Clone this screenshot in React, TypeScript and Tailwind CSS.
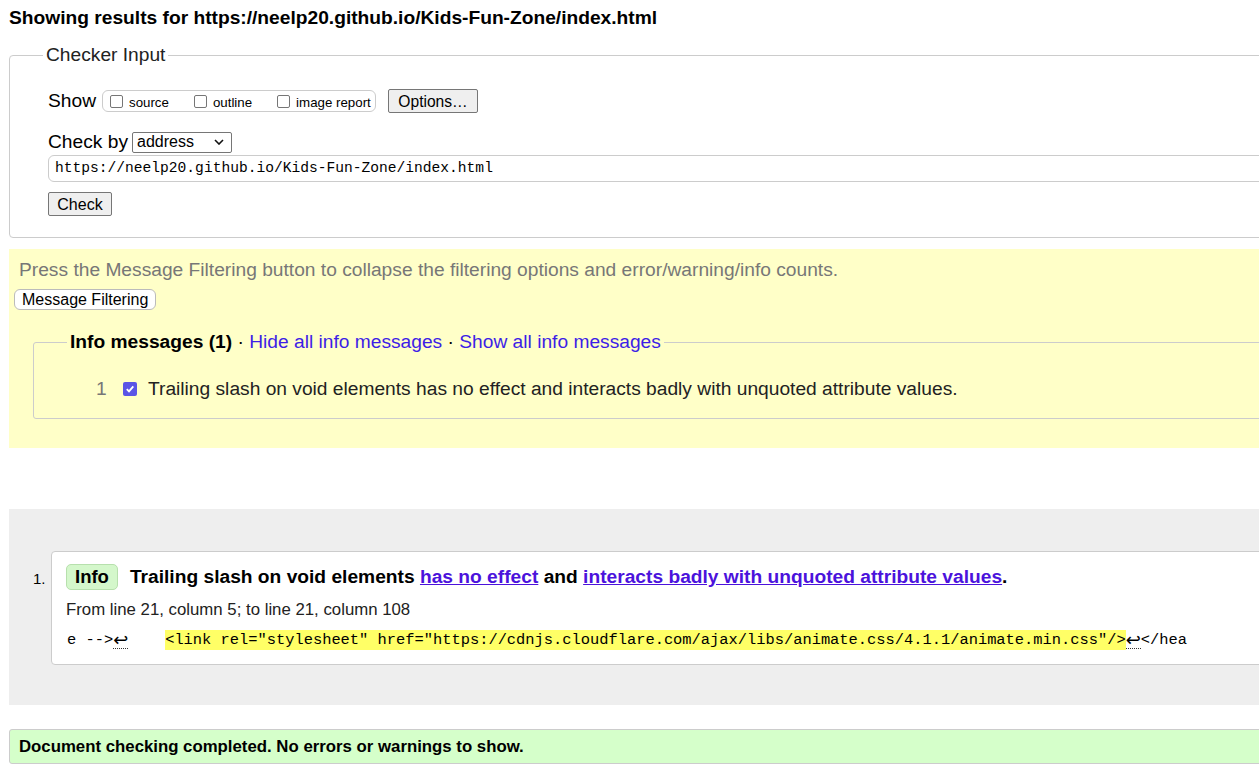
import React from "react";

const sans = { fontFamily: '"Liberation Sans", Arial, sans-serif' };

function Box({ checked = false }: { checked?: boolean }) {
  if (checked) {
    return (
      <span className="inline-flex h-[14px] w-[14px] items-center justify-center rounded-[2px] bg-[#5a55e6]">
        <svg width="10" height="10" viewBox="0 0 10 10">
          <path d="M1.8 5.2 L4 7.4 L8.3 2.4" stroke="white" strokeWidth="1.8" fill="none" />
        </svg>
      </span>
    );
  }
  return <span className="inline-block h-[13px] w-[13px] shrink-0 rounded-[2px] border border-[#767676] bg-white" />;
}

function Ret() {
  return (
    <span className="w-[15px] border-b border-dotted border-[#333] text-center font-['DejaVu_Sans',sans-serif] text-[18px] leading-[16px]">↩</span>
  );
}

export default function App() {
  return (
    <div className="h-[764px] w-full overflow-hidden bg-white text-black" style={sans}>
      <div className="pl-[9px] pr-0">
        <h2 className="pt-[7px] text-[19.2px] font-bold leading-[22px]">
          Showing results for https://neelp20.github.io/Kids-Fun-Zone/index.html
        </h2>

        {/* checker input */}
        <fieldset className="mr-[-30px] mt-[15px] rounded-[4px] border border-[#cccccc] pb-[20px] pl-[38px]">
          <legend className="ml-[-5px] px-[3px] text-[19.2px] leading-[22px] text-[#222]">Checker Input</legend>

          <div className="mt-[23px] flex h-[24px] items-center">
            <span className="text-[19.2px] leading-[22px]">Show</span>
            <div className="ml-[6px] flex h-[22px] w-[274px] items-center rounded-[6px] border border-[#cccccc] pl-[7px] text-[13.3px]">
              <label className="flex items-center gap-[6px]">
                <Box /> <span className="mt-[3px]">source</span>
              </label>
              <label className="ml-[25px] flex items-center gap-[6px]">
                <Box /> <span className="mt-[3px]">outline</span>
              </label>
              <label className="ml-[25px] flex items-center gap-[6px]">
                <Box /> <span className="mt-[3px]">image report</span>
              </label>
            </div>
            <button className="ml-[12px] h-[24px] w-[90px] rounded-[2px] border border-[#767676] bg-[#efefef] text-[15.6px]">
              Options…
            </button>
          </div>

          <div className="mt-[19px] flex h-[20px] items-center">
            <span className="text-[19.2px] leading-[22px]">Check by</span>
            <div className="ml-[4px] flex h-[21px] w-[100px] items-center justify-between rounded-[2px] border border-[#767676] pl-[4px] pr-[7px] text-[16px]">
              <span>address</span>
              <svg width="10" height="6" viewBox="0 0 10 6">
                <path d="M1 1 L5 5 L9 1" stroke="#111" strokeWidth="1.6" fill="none" />
              </svg>
            </div>
          </div>

          <div className="mt-[3px] flex h-[27px] items-center rounded-[6px] border border-[#cccccc] pl-[6px] font-['Liberation_Mono',monospace] text-[14.6px]">
            https://neelp20.github.io/Kids-Fun-Zone/index.html
          </div>

          <button className="mt-[10px] h-[24px] w-[64px] rounded-[2px] border border-[#767676] bg-[#efefef] text-[16px]">
            Check
          </button>
        </fieldset>

        {/* message filtering */}
        <div className="mr-[-30px] mt-[11px] bg-[#ffffc8] pb-[29px] pt-[10px]">
          <p className="pl-[10px] text-[19.2px] leading-[22px] text-[#777777]">
            Press the Message Filtering button to collapse the filtering options and error/warning/info counts.
          </p>
          <button className="ml-[5px] mt-[8px] h-[21px] rounded-[6px] border border-[#bbbbbb] bg-white px-[7px] text-[16px] leading-[19px]">
            Message Filtering
          </button>
          <fieldset className="ml-[24px] mt-[19px] rounded-[3px] border border-[#cccccc] pb-[18px]">
            <legend className="ml-[33px] px-[3px] text-[19.2px] leading-[22px]">
              <strong>Info messages (1)</strong> ·{" "}
              <a className="text-[#3d1ee6]">Hide all info messages</a> ·{" "}
              <a className="text-[#3d1ee6]">Show all info messages</a>
            </legend>
            <div className="mt-[25px] flex h-[22px] items-center text-[19.2px] leading-[22px]">
              <span className="ml-[62px] w-[12px] text-[#777]">1</span>
              <span className="mb-[3px] ml-[15px]">
                <Box checked />
              </span>
              <span className="ml-[11px] text-[#222]">
                Trailing slash on void elements has no effect and interacts badly with unquoted attribute values.
              </span>
            </div>
          </fieldset>
        </div>

        {/* results */}
        <div className="mr-[-30px] mt-[61px] flex bg-[#eeeeee] pb-[40px] pt-[42px]">
          <span className="ml-[24px] mt-[17px] w-[18px] text-[15px]">1.</span>
          <div className="flex-1 rounded-[4px] border border-[#cccccc] bg-white pb-[14px] pl-[14px] pt-[12px]">
            <div className="flex h-[26px] items-center">
              <span className="flex h-[26px] items-center rounded-[5px] border border-[#b7e0ad] bg-[#d4f7cb] px-[8px] text-[18.5px] font-bold">
                Info
              </span>
              <p className="ml-[12px] text-[19.2px] font-bold leading-[22px]">
                Trailing slash on void elements{" "}
                <a className="text-[#4b12dc] underline">has no effect</a> and{" "}
                <a className="text-[#4b12dc] underline">interacts badly with unquoted attribute values</a>.
              </p>
            </div>
            <p className="mt-[10px] text-[16.8px] leading-[20px] text-[#222]">From line 21, column 5; to line 21, column 108</p>
            <div className="ml-[1px] mt-[10px] flex items-center whitespace-pre font-['Liberation_Mono',monospace] text-[15.4px] leading-[20px]">
              <span>e --&gt;</span>
              <Ret />
              <span>    </span>
              <span className="bg-[#ffff66]">
                &lt;link rel="stylesheet" href="https://cdnjs.cloudflare.com/ajax/libs/animate.css/4.1.1/animate.min.css"/&gt;
              </span>
              <Ret />
              <span>&lt;/hea</span>
            </div>
          </div>
        </div>

        {/* summary */}
        <div className="mr-[-30px] mt-[24px] flex h-[35px] items-center rounded-[3px] border border-[#cccccc] bg-[#d5ffca] pl-[9px] text-[16.8px] font-bold">
          Document checking completed. No errors or warnings to show.
        </div>
      </div>
    </div>
  );
}
